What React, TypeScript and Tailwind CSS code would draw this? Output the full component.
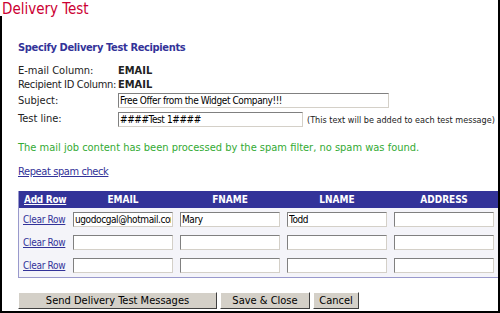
import React from 'react';

const font = "font-['DejaVu_Sans_Condensed','DejaVu_Sans',sans-serif]";

const inputCls =
  'h-[15px] bg-white border border-t-[#808080] border-l-[#808080] border-r-[#d4d0c8] border-b-[#d4d0c8] px-[1px] text-[10px] leading-[13px] tracking-[-0.4px] text-black outline-none';

const btnCls =
  'h-[17px] bg-[#d4d0c8] border border-t-white border-l-white border-r-[#404040] border-b-[#404040] text-[11px] leading-[15px] text-black whitespace-nowrap';

const rows = [
  { email: 'ugodocgal@hotmail.com', fname: 'Mary', lname: 'Todd', address: '' },
  { email: '', fname: '', lname: '', address: '' },
  { email: '', fname: '', lname: '', address: '' },
];

const App: React.FC = () => {
  return (
    <div className={`w-[500px] h-[313px] bg-white overflow-hidden border-r-2 border-b-2 border-black ${font}`}>
      {/* Title */}
      <div className="h-[16px] pl-[2px] pt-[1px] text-[15px] leading-[16px] text-[#cc0033]">Delivery Test</div>

      <div className="h-[295px] border-l-2 border-black pl-[16px]">
        <div className="pt-[26px] text-[11px] leading-[12px] font-bold text-[#333399] tracking-[-0.35px]">
          Specify Delivery Test Recipients
        </div>

        {/* Settings */}
        <div className="mt-[10px] grid grid-cols-[100px_auto] text-[11px] text-[#222] whitespace-nowrap">
          <div className="h-[14px] leading-[14px]">E-mail Column:</div>
          <div className="h-[14px] leading-[14px] font-bold">EMAIL</div>
          <div className="h-[14px] leading-[14px] tracking-[-0.3px]">Recipient ID Column:</div>
          <div className="h-[14px] leading-[14px] font-bold">EMAIL</div>
          <div className="h-[19px] leading-[18px]">Subject:</div>
          <div className="h-[19px] pt-[1px]">
            <input className={`${inputCls} w-[271px] ${font}`} defaultValue="Free Offer from the Widget Company!!!" />
          </div>
          <div className="h-[19px] leading-[16px]">Test line:</div>
          <div className="h-[19px] pt-[1px] flex items-start gap-[4px]">
            <input className={`${inputCls} w-[185px] ${font}`} defaultValue="####Test 1####" />
            <span className="text-[9px] leading-[16px]">(This text will be added to each test message)</span>
          </div>
        </div>

        <div className="mt-[11px] text-[11px] leading-[14px] text-[#33aa33] whitespace-nowrap">
          The mail job content has been processed by the spam filter, no spam was found.
        </div>

        <div className="mt-[10px] text-[11px] leading-[14px] tracking-[-0.4px]">
          <a href="#" className="text-[#333399] underline">Repeat spam check</a>
        </div>

        {/* Recipients table */}
        <div className="mt-[12px] border-l border-r border-b border-[#9999cc] w-[484px]">
          <div className="grid grid-cols-[54px_107px_107px_107px_107px] h-[17px] bg-[#333399] text-[10px] leading-[17px] font-bold text-white whitespace-nowrap">
            <div className="pl-[5px] tracking-[-0.3px]">
              <a href="#" className="underline">Add Row</a>
            </div>
            <div className="text-center pr-[7px]">EMAIL</div>
            <div className="text-center pr-[7px]">FNAME</div>
            <div className="text-center pr-[7px]">LNAME</div>
            <div className="text-center pr-[7px]">ADDRESS</div>
          </div>
          {rows.map((r, i) => (
            <div
              key={i}
              className="grid grid-cols-[54px_107px_107px_107px_107px] h-[23px] items-center bg-[#f4f4f9] text-[10px] whitespace-nowrap"
            >
              <div className="pl-[4px] tracking-[-0.3px]">
                <a href="#" className="text-[#333399] underline">Clear Row</a>
              </div>
              <div>
                <input className={`${inputCls} w-[100px] ${font}`} defaultValue={r.email} />
              </div>
              <div>
                <input className={`${inputCls} w-[100px] ${font}`} defaultValue={r.fname} />
              </div>
              <div>
                <input className={`${inputCls} w-[100px] ${font}`} defaultValue={r.lname} />
              </div>
              <div>
                <input className={`${inputCls} w-[100px] ${font}`} defaultValue={r.address} />
              </div>
            </div>
          ))}
        </div>

        {/* Buttons */}
        <div className="mt-[14px] flex gap-[3px]">
          <button className={`${btnCls} w-[199px] ${font}`}>Send Delivery Test Messages</button>
          <button className={`${btnCls} w-[90px] ${font}`}>Save &amp; Close</button>
          <button className={`${btnCls} w-[46px] ${font}`}>Cancel</button>
        </div>
      </div>
    </div>
  );
};

export default App;
